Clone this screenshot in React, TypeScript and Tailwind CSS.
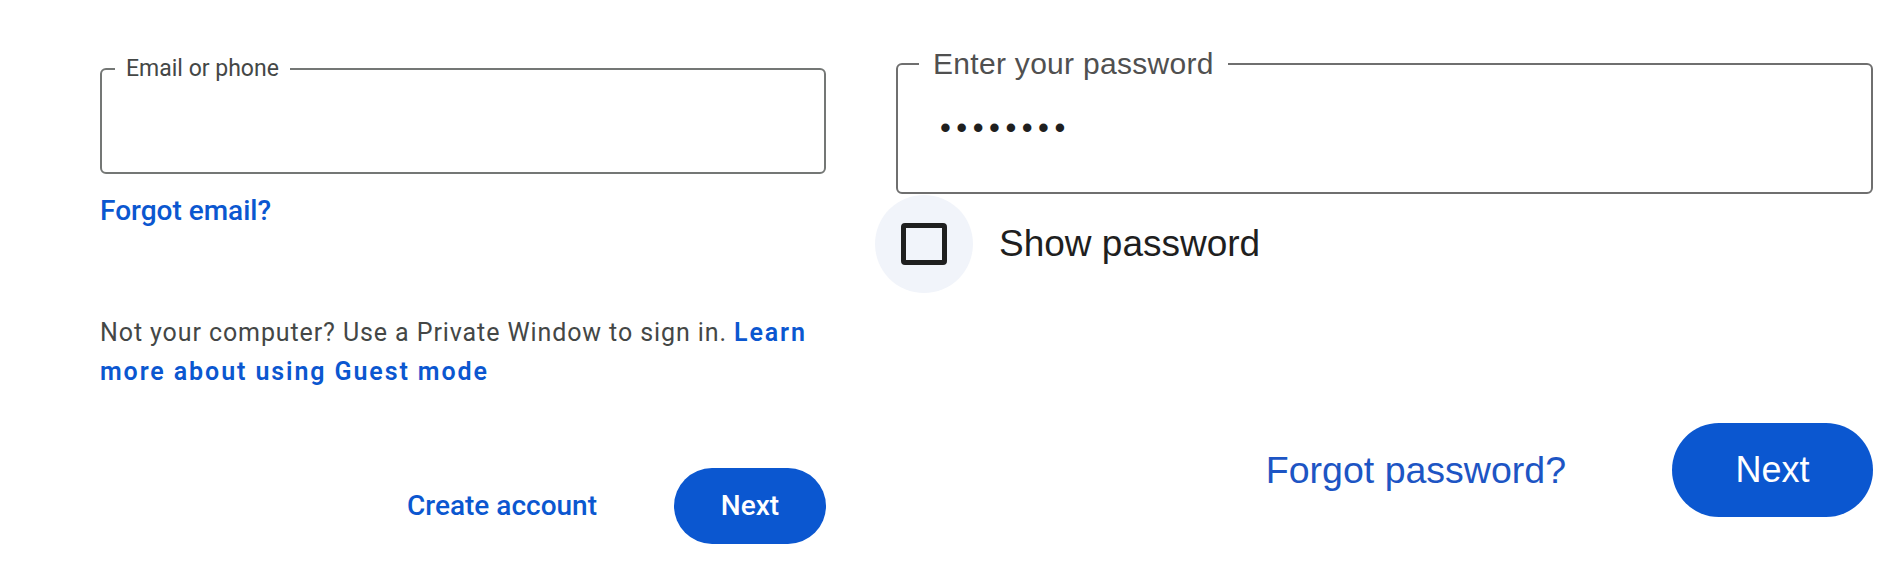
const leftFont = { fontFamily: "Roboto, 'Noto Sans', sans-serif" };
const rightFont = { fontFamily: "'Liberation Sans', Arial, sans-serif" };

function EmailStep() {
  return (
    <div className="flex w-[726px] shrink-0 flex-col pt-[56px]" style={leftFont}>
      <fieldset className="m-0 h-[118px] min-w-0 rounded-[6px] border-2 border-[#747775] px-[13px] pb-0 pt-0">
        <legend className="px-[11px] text-[23px] leading-[26px] text-[#444746]">
          Email or phone
        </legend>
        <input
          aria-label="Email or phone"
          className="h-[80px] w-full bg-transparent px-[12px] text-[24px] text-[#1f1f1f] outline-none"
        />
      </fieldset>

      <a className="mt-[20px] self-start text-[28px] font-medium leading-[34px] text-[#0b57d0]">
        Forgot email?
      </a>

      <p className="mt-[85px] text-[25px] leading-[39px] tracking-[0.9px] text-[#444746]">
        Not your computer? Use a Private Window to sign in.{' '}
        <a className="font-semibold tracking-[1.9px] text-[#0b57d0]">
          Learn more about using Guest mode
        </a>
      </p>

      <div className="mt-[77px] flex items-center justify-end gap-[77px]">
        <button className="text-[28px] font-medium leading-[34px] text-[#0b57d0]">
          Create account
        </button>
        <button className="h-[76px] w-[152px] rounded-full bg-[#0b57d0] text-[28px] font-medium text-white">
          Next
        </button>
      </div>
    </div>
  );
}

function PasswordStep() {
  return (
    <div className="ml-[70px] flex w-[977px] shrink-0 flex-col pt-[47px]" style={rightFont}>
      <fieldset className="m-0 h-[147px] min-w-0 rounded-[6px] border-2 border-[#6f6f6f] px-[21px] pb-0 pt-0">
        <legend className="px-[14px] text-[30px] leading-[34px] tracking-[0.3px] text-[#505050]">
          Enter your password
        </legend>
        <div className="flex h-[92px] items-center pl-[21px]">
          <span className="text-[31px] leading-none tracking-[5.5px] text-[#1f1f1f]">
            ••••••••
          </span>
        </div>
      </fieldset>

      <label className="-ml-[21px] mt-[1px] flex items-center gap-[26px]">
        <span className="flex h-[98px] w-[98px] items-center justify-center rounded-full bg-[#f1f4fa]">
          <span className="h-[42px] w-[46px] rounded-[4px] border-[5px] border-[#1f1f1f]" />
        </span>
        <span className="text-[37px] leading-[42px] text-[#1f1f1f]">Show password</span>
      </label>

      <div className="mt-[130px] flex items-center justify-end gap-[106px]">
        <button className="text-[37.5px] leading-[42px] text-[#1d55c4]">Forgot password?</button>
        <button className="h-[94px] w-[201px] rounded-full bg-[#0b57d0] text-[36px] text-white">
          Next
        </button>
      </div>
    </div>
  );
}

export default function App() {
  return (
    <div className="flex h-[581px] w-[1902px] overflow-hidden bg-white pl-[100px]">
      <EmailStep />
      <PasswordStep />
    </div>
  );
}
